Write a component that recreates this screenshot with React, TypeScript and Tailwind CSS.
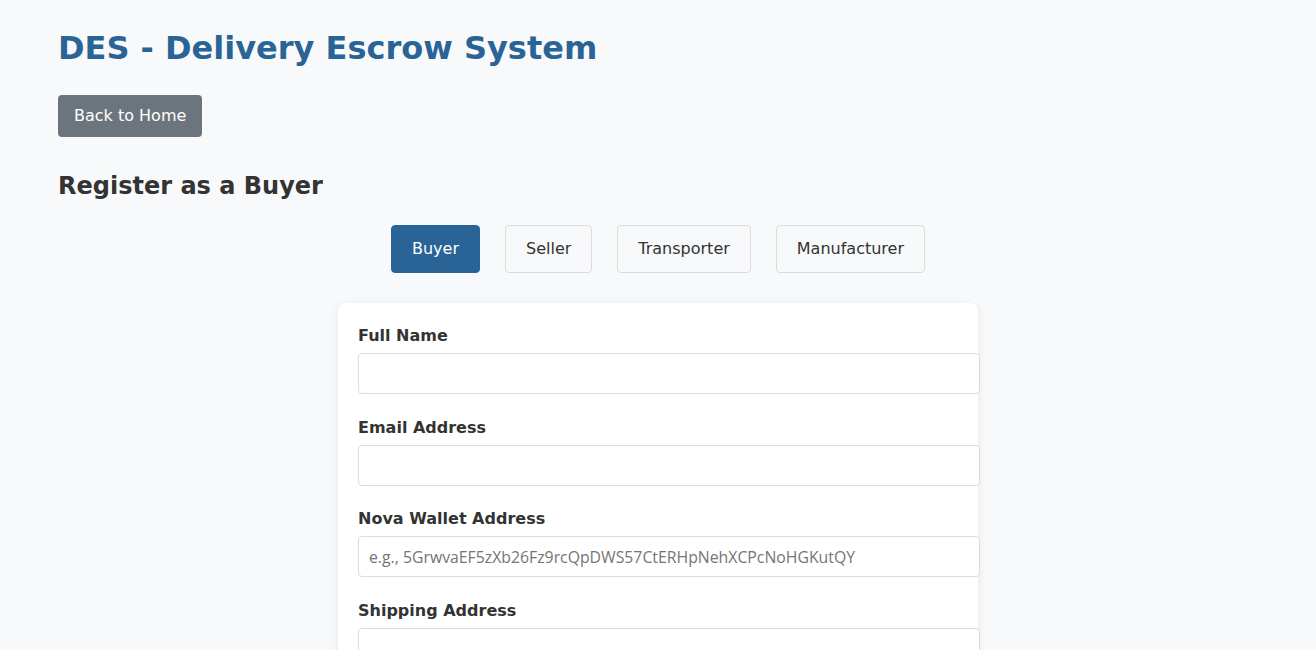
const roles = ['Buyer', 'Seller', 'Transporter', 'Manufacturer']

const fields = [
  { label: 'Full Name', placeholder: '' },
  { label: 'Email Address', placeholder: '' },
  { label: 'Nova Wallet Address', placeholder: 'e.g., 5GrwvaEF5zXb26Fz9rcQpDWS57CtERHpNehXCPcNoHGKutQY' },
  { label: 'Shipping Address', placeholder: '' },
]

export default function App() {
  return (
    <div className="min-h-screen bg-[#f8f9fa] px-[58px] pt-[30px] pb-10 font-['DejaVu_Sans',sans-serif] text-[#333]">
      {/* Header */}
      <h1 className="text-[32px] leading-[37px] font-bold text-[#2a6496]">
        DES - Delivery Escrow System
      </h1>

      <button className="mt-[28px] h-[42px] px-4 rounded bg-[#6c757d] text-white text-base">
        Back to Home
      </button>

      <h2 className="mt-[35px] text-[24px] leading-[28px] font-bold text-[#333]">
        Register as a Buyer
      </h2>

      {/* Role tabs */}
      <div className="mt-[25px] flex justify-center gap-[25px] -mx-[58px]">
        {roles.map((r, i) => (
          <button
            key={r}
            className={`h-[48px] px-5 rounded text-base border ${
              i === 0
                ? 'bg-[#2a6496] border-[#2a6496] text-white'
                : 'bg-[#f8f9fa] border-[#dcdcdc] text-[#333]'
            }`}
          >
            {r}
          </button>
        ))}
      </div>

      {/* Form card */}
      <div className="mt-[30px] -mx-[58px] flex justify-center">
        <div className="w-[640px] bg-white rounded-lg shadow-[0_2px_10px_rgba(0,0,0,0.08)] px-5 pt-5 pb-5">
          {fields.map(f => (
            <div key={f.label} className="mb-[20.67px]">
              <label className="block text-base leading-[25px] font-bold text-[#333] mb-[5px]">
                {f.label}
              </label>
              <input
                type="text"
                placeholder={f.placeholder}
                className="block w-[622px] h-[41px] px-[10px] border border-[#dcdcdc] rounded bg-white font-['Open_Sans',sans-serif] text-[15.8px] text-[#333] placeholder:text-[#757575] outline-none"
              />
            </div>
          ))}
        </div>
      </div>
    </div>
  )
}
